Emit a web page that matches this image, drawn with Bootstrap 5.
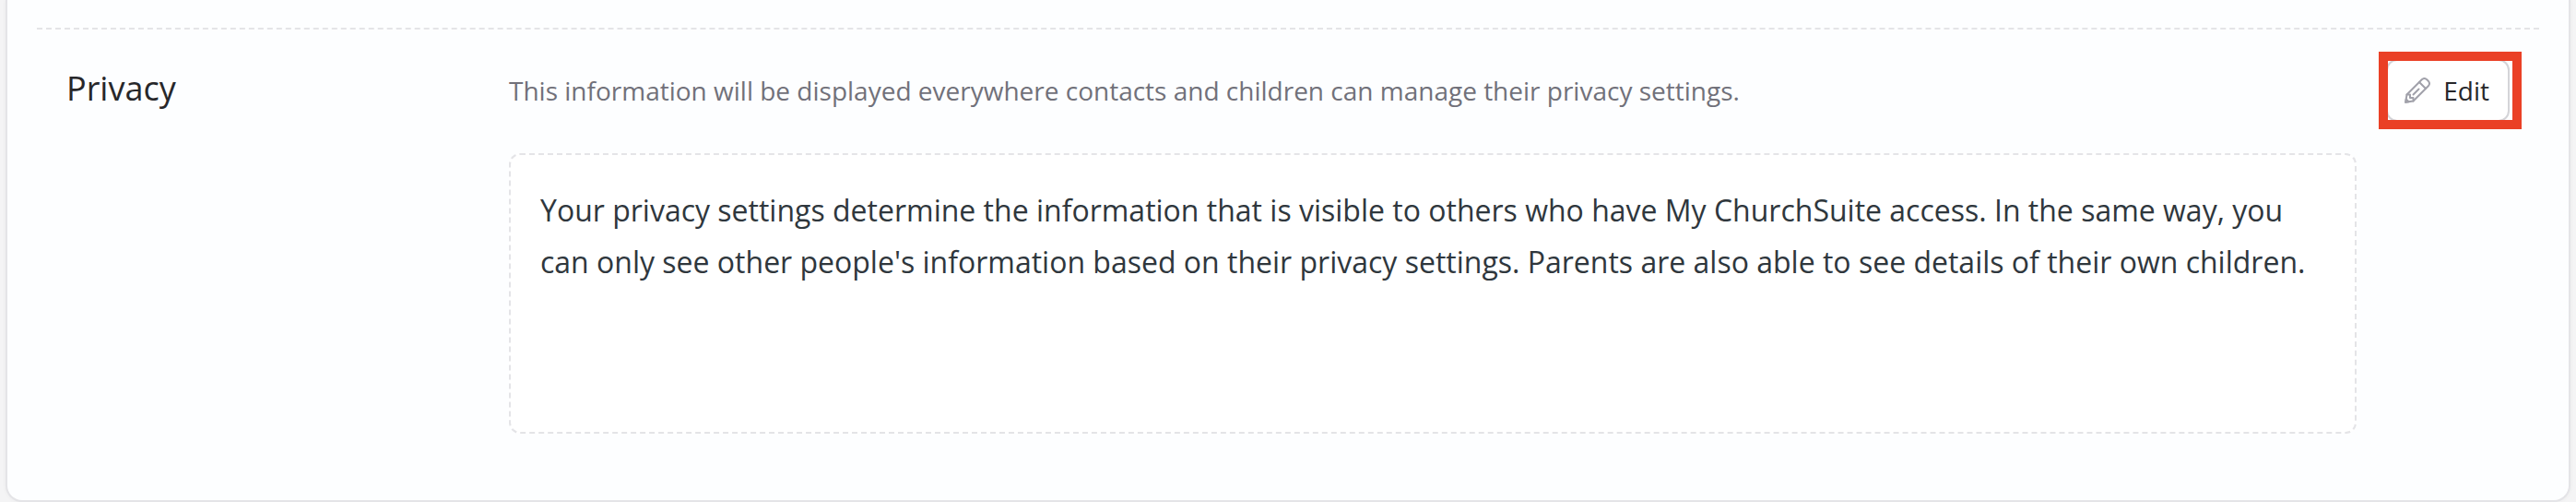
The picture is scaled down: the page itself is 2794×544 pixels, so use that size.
<!DOCTYPE html>
<html lang="en">
<head>
<meta charset="utf-8">
<meta name="viewport" content="width=device-width, initial-scale=1">
<title>Privacy settings</title>
<link href="https://cdn.jsdelivr.net/npm/bootstrap@5.3.0/dist/css/bootstrap.min.css" rel="stylesheet">
<style>
  body { background: #f4f4f5; color: #27272a; font-family: "Open Sans", sans-serif; font-size: 28px; line-height: 40px; }
  .settings-card { background: #fdfeff; border: 2px solid #e4e4e7; border-top: 0; border-radius: 0 0 18px 18px; box-shadow: 0 0 4px rgba(0, 0, 0, .05); margin: 0 6px; padding: 30px 32px 72px; }
  .settings-row { border-top: 2px dashed #e4e4e7; padding: 32px 32px 0; }
  .settings-label { flex: 0 0 480px; font-size: 36px; line-height: 64px; }
  .settings-hint { color: #71717a; padding: 14px 0; }
  .settings-text { background: #fff; border: 2px dashed #e4e4e7; border-radius: 12px; color: #2f373d; font-size: 32px; line-height: 56px; min-height: 304px; margin-top: 34px; padding: 32px; }
  .edit-button { --bs-btn-color: #27272a; --bs-btn-bg: #fff; --bs-btn-border-color: #d4d4d8; --bs-btn-hover-bg: #f4f4f5; --bs-btn-hover-border-color: #d4d4d8; --bs-btn-font-size: 28px; --bs-btn-line-height: 40px; --bs-btn-border-width: 2px; --bs-btn-border-radius: 12px; padding: 12px 20px 12px 18px; gap: 14px; margin-left: 32px; }
  .edit-button svg { color: #a1a1aa; }
  .edit-button::after { content: ""; position: absolute; inset: -10px -15px -10px -10px; border: 10px solid #ea4026; }
</style>
</head>
<body>
<main class="settings-card">
  <section class="settings-row d-flex align-items-start" aria-labelledby="privacy-title">
    <h2 class="settings-label fw-normal m-0" id="privacy-title">Privacy</h2>
    <div class="flex-grow-1">
      <p class="settings-hint m-0">This information will be displayed everywhere contacts and children can manage their privacy settings.</p>
      <div class="settings-text">
        <p class="m-0">Your privacy settings determine the information that is visible to others who have My ChurchSuite access. In the same way, you can only see other people's information based on their privacy settings. Parents are also able to see details of their own children.</p>
      </div>
    </div>
    <button type="button" class="btn edit-button position-relative d-flex align-items-center flex-shrink-0">
      <svg width="28" height="28" viewBox="0 0 28 28" fill="none" stroke="currentColor" stroke-width="2" stroke-linejoin="round" stroke-linecap="round" aria-hidden="true">
        <path d="M1.200 26.800 2.500 18.500 19 2Q21.500 0 24 2L26 4Q28 6.500 26 9L9.500 25.500Z"/>
        <path d="M16 5 23 12M2.500 18.500 6 18.500 6 22 9.500 22 9.500 25.500M9.500 18.500 15.500 12.500"/>
        <path d="M1.200 26.800 1.700 23.500 4.500 26.300Z" fill="currentColor"/>
      </svg>
      <span>Edit</span>
    </button>
  </section>
</main>
<script src="https://cdn.jsdelivr.net/npm/bootstrap@5.3.0/dist/js/bootstrap.bundle.min.js"></script>
</body>
</html>
